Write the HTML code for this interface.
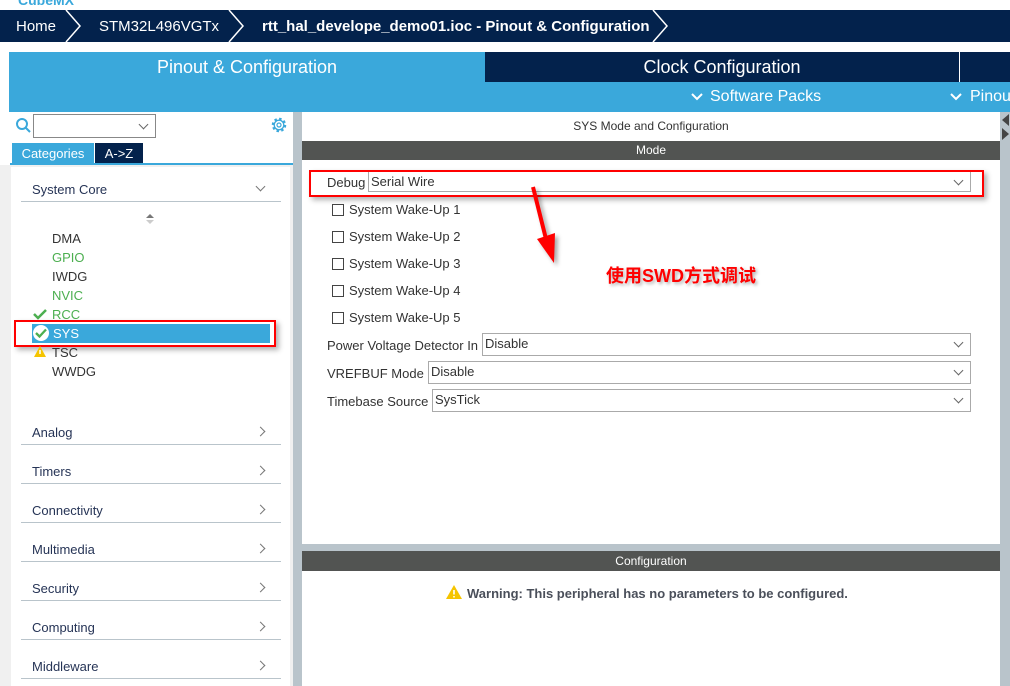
<!DOCTYPE html>
<html><head><meta charset="utf-8"><style>
*{margin:0;padding:0;box-sizing:border-box}
body{width:1010px;height:686px;overflow:hidden;background:#fff;font-family:"Liberation Sans",Arial,sans-serif;position:relative}
.a{position:absolute}
.t{font-size:13px;color:#333;white-space:nowrap}
.sel{position:absolute;border:1px solid #aaa;background:#fff;height:21px;font-size:13px;color:#333;padding:2px 2px}
.chev{position:absolute;right:8px;top:5px;width:7px;height:7px;border-right:1px solid #666;border-bottom:1px solid #666;transform:rotate(45deg)}
.cb{position:absolute;width:12px;height:12px;border:1px solid #444;background:#fff}
.cat{position:absolute;left:21px;width:260px;height:39px;border-bottom:1px solid #b9c4cb}
.cat span{position:absolute;left:11px;bottom:4px;font-size:13px;color:#263456}
.cat i{position:absolute;right:17px;bottom:9px;width:7px;height:7px;border-right:1px solid #777;border-top:1px solid #777;transform:rotate(45deg)}
</style></head><body>
<div class="a" style="left:18px;top:-8px;font-size:14px;font-weight:bold;color:#3aa8db">CubeMX</div>
<div class="a" style="left:0;top:10px;width:1010px;height:32px;background:#03224c"></div>
<svg class="a" style="left:0;top:10px" width="680" height="32"><g fill="none" stroke="#fff" stroke-width="1.5"><path d="M66 0 L80 16 L66 32"/><path d="M229 0 L243 16 L229 32"/><path d="M653 0 L667 16 L653 32"/></g></svg>
<div class="a" style="left:16px;top:18px;font-size:15px;color:#fff">Home</div>
<div class="a" style="left:99px;top:18px;font-size:15px;color:#fff">STM32L496VGTx</div>
<div class="a" style="left:262px;top:18px;font-size:15px;color:#fff;font-weight:bold">rtt_hal_develope_demo01.ioc - Pinout &amp; Configuration</div>
<div class="a" style="left:9px;top:52px;width:476px;height:30px;background:#3aa8db;color:#fff;font-size:18px;text-align:center;line-height:30px">Pinout &amp; Configuration</div>
<div class="a" style="left:485px;top:52px;width:474px;height:30px;background:#03224c;color:#fff;font-size:18px;text-align:center;line-height:30px">Clock Configuration</div>
<div class="a" style="left:960px;top:52px;width:50px;height:30px;background:#03224c"></div>
<div class="a" style="left:9px;top:82px;width:1001px;height:30px;background:#3aa8db"></div>
<svg class="a" style="left:690px;top:92px" width="14" height="10"><path d="M2 2 L7 7 L12 2" fill="none" stroke="#fff" stroke-width="2"/></svg>
<div class="a" style="left:710px;top:88px;font-size:16px;color:#fff">Software Packs</div>
<svg class="a" style="left:949px;top:92px" width="14" height="10"><path d="M2 2 L7 7 L12 2" fill="none" stroke="#fff" stroke-width="2"/></svg>
<div class="a" style="left:970px;top:88px;font-size:16px;color:#fff">Pinout</div>
<div class="a" style="left:0;top:112px;width:293px;height:574px;background:#f0f0f0"></div>
<div class="a" style="left:0;top:112px;width:293px;height:53px;background:#fff"></div>
<div class="a" style="left:11px;top:167px;width:279px;height:519px;background:#fff"></div>
<div class="a" style="left:293px;top:112px;width:9px;height:574px;background:#b9c4cb"></div>
<svg class="a" style="left:15px;top:117px" width="18" height="18"><circle cx="7" cy="7" r="5" fill="none" stroke="#3aa8db" stroke-width="2"/><path d="M11 11 L15 15" stroke="#3aa8db" stroke-width="2"/></svg>
<div class="a" style="left:33px;top:114px;width:123px;height:24px;border:1px solid #888;background:#fff"><div class="chev" style="top:6px"></div></div>
<svg class="a" style="left:270px;top:116px" width="18" height="18" viewBox="0 0 18 18"><circle cx="9" cy="9" r="6" fill="none" stroke="#3aa8db" stroke-width="2.5" stroke-dasharray="2.4 2.3"/><circle cx="9" cy="9" r="4.8" fill="none" stroke="#3aa8db" stroke-width="1.3"/><circle cx="9" cy="9" r="2" fill="none" stroke="#3aa8db" stroke-width="1.2"/></svg>
<div class="a" style="left:12px;top:143px;width:82px;height:21px;background:#3aa8db;color:#fff;font-size:13px;text-align:center;line-height:21px">Categories</div>
<div class="a" style="left:95px;top:143px;width:48px;height:21px;background:#03224c;color:#fff;font-size:13px;text-align:center;line-height:21px">A-&gt;Z</div>
<div class="a" style="left:10px;top:163px;width:283px;height:2px;background:#3aa8db"></div>
<div class="cat" style="top:163px"><span>System Core</span><i style="transform:rotate(135deg);bottom:11px"></i></div>
<div class="a" style="left:146px;top:214px;width:0;height:0;border-left:4px solid transparent;border-right:4px solid transparent;border-bottom:4px solid #777"></div>
<div class="a" style="left:146px;top:220px;width:0;height:0;border-left:4px solid transparent;border-right:4px solid transparent;border-top:4px solid #ccc"></div>
<div class="a t" style="left:52px;top:231px">DMA</div>
<div class="a t" style="left:52px;top:250px;color:#4caf50">GPIO</div>
<div class="a t" style="left:52px;top:269px">IWDG</div>
<div class="a t" style="left:52px;top:288px;color:#4caf50">NVIC</div>
<svg class="a" style="left:33px;top:308px" width="14" height="12"><path d="M1 6 L5 10 L13 2" fill="none" stroke="#4caf50" stroke-width="2.5"/></svg>
<div class="a t" style="left:52px;top:307px;color:#4caf50">RCC</div>
<div class="a" style="left:32px;top:324px;width:238px;height:19px;background:#3aa8db"></div>
<div class="a" style="left:33px;top:325px;width:16px;height:16px;border-radius:50%;background:#fff"></div>
<svg class="a" style="left:35px;top:328px" width="12" height="10"><path d="M1 5 L4.5 8.5 L11 1.5" fill="none" stroke="#4caf50" stroke-width="2.3"/></svg>
<div class="a t" style="left:53px;top:326px;color:#fff">SYS</div>
<div class="a" style="left:14px;top:320px;width:262px;height:27px;border:2px solid #f00;box-shadow:3px 3px 5px rgba(0,0,0,.3)"></div>
<svg class="a" style="left:33px;top:345px" width="14" height="13"><path d="M7 1 L13 12 L1 12 Z" fill="#f5c400"/><path d="M7 5v4" stroke="#fff" stroke-width="1.5"/></svg>
<div class="a t" style="left:52px;top:345px">TSC</div>
<div class="a t" style="left:52px;top:364px">WWDG</div>
<div class="cat" style="top:406px"><span>Analog</span><i></i></div>
<div class="cat" style="top:445px"><span>Timers</span><i></i></div>
<div class="cat" style="top:484px"><span>Connectivity</span><i></i></div>
<div class="cat" style="top:523px"><span>Multimedia</span><i></i></div>
<div class="cat" style="top:562px"><span>Security</span><i></i></div>
<div class="cat" style="top:601px"><span>Computing</span><i></i></div>
<div class="cat" style="top:640px"><span>Middleware</span><i></i></div>
<div class="a" style="left:302px;top:112px;width:708px;height:574px;background:#b9c4cb"></div>
<div class="a" style="left:302px;top:112px;width:698px;height:432px;background:#fff"></div>
<div class="a" style="left:1002px;top:114px;width:0;height:0;border-top:6px solid transparent;border-bottom:6px solid transparent;border-right:7px solid #444"></div>
<div class="a" style="left:1002px;top:128px;width:0;height:0;border-top:6px solid transparent;border-bottom:6px solid transparent;border-left:7px solid #444"></div>
<div class="a t" style="left:302px;top:119px;width:698px;text-align:center;font-size:12px">SYS Mode and Configuration</div>
<div class="a" style="left:302px;top:141px;width:698px;height:19px;background:#525452;color:#fff;font-size:12px;text-align:center;line-height:19px">Mode</div>
<div class="a t" style="left:327px;top:175px">Debug</div>
<div class="sel" style="left:368px;top:171px;width:603px">Serial Wire<div class="chev"></div></div>
<div class="a" style="left:309px;top:170px;width:675px;height:27px;border:2px solid #f00;box-shadow:3px 3px 5px rgba(0,0,0,.3)"></div>
<div class="cb" style="left:332px;top:204px"></div><div class="a t" style="left:349px;top:202px">System Wake-Up 1</div>
<div class="cb" style="left:332px;top:231px"></div><div class="a t" style="left:349px;top:229px">System Wake-Up 2</div>
<div class="cb" style="left:332px;top:258px"></div><div class="a t" style="left:349px;top:256px">System Wake-Up 3</div>
<div class="cb" style="left:332px;top:285px"></div><div class="a t" style="left:349px;top:283px">System Wake-Up 4</div>
<div class="cb" style="left:332px;top:312px"></div><div class="a t" style="left:349px;top:310px">System Wake-Up 5</div>
<div class="a t" style="left:327px;top:338px">Power Voltage Detector In</div>
<div class="sel" style="left:482px;top:333px;width:489px;height:23px">Disable<div class="chev"></div></div>
<div class="a t" style="left:327px;top:366px">VREFBUF Mode</div>
<div class="sel" style="left:428px;top:361px;width:543px;height:23px">Disable<div class="chev"></div></div>
<div class="a t" style="left:327px;top:394px">Timebase Source</div>
<div class="sel" style="left:432px;top:389px;width:539px;height:23px">SysTick<div class="chev"></div></div>
<svg class="a" style="left:525px;top:183px" width="45" height="85"><g style="filter:drop-shadow(3px 3px 2px rgba(0,0,0,.35))"><path d="M8 4 L22 60" stroke="#f00" stroke-width="4"/><path d="M12 56 L30 50 L29 80 Z" fill="#f00"/></g></svg>
<div class="a" style="left:606px;top:262px;font-size:18px;font-weight:bold;color:#f00;font-family:'Liberation Sans','Noto Sans CJK SC',sans-serif;text-shadow:2px 2px 3px rgba(0,0,0,.3)">使用SWD方式调试</div>
<div class="a" style="left:302px;top:551px;width:698px;height:135px;background:#fff"></div>
<div class="a" style="left:302px;top:551px;width:698px;height:20px;background:#525452;color:#fff;font-size:12px;text-align:center;line-height:20px">Configuration</div>
<svg class="a" style="left:445px;top:584px" width="18" height="16"><path d="M9 1 L17 15 L1 15 Z" fill="#f5c400"/><path d="M9 6v4.5M9 12v1.5" stroke="#fff" stroke-width="1.6"/></svg>
<div class="a" style="left:467px;top:586px;font-size:13px;font-weight:bold;color:#4a4f5a">Warning: This peripheral has no parameters to be configured.</div>
</body></html>
